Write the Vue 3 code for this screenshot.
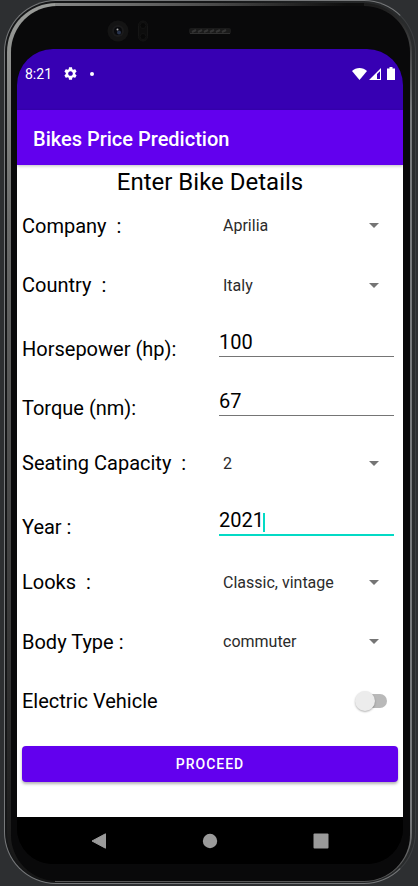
<script setup>
import { reactive } from 'vue'

const fields = [
  { id: 'company', label: 'Company  :', type: 'select', options: ['Aprilia', 'Bajaj', 'Honda', 'Yamaha'] },
  { id: 'country', label: 'Country  :', type: 'select', options: ['Italy', 'India', 'Japan', 'Germany'] },
  { id: 'horsepower', label: 'Horsepower (hp):', type: 'text' },
  { id: 'torque', label: 'Torque (nm):', type: 'text' },
  { id: 'seating', label: 'Seating Capacity  :', type: 'select', options: ['2', '1', '3'] },
  { id: 'year', label: 'Year :', type: 'text', active: true },
  { id: 'looks', label: 'Looks  :', type: 'select', options: ['Classic, vintage', 'Sporty', 'Modern'] },
  { id: 'body', label: 'Body Type :', type: 'select', options: ['commuter', 'cruiser', 'tourer'] },
]

const form = reactive({
  company: 'Aprilia',
  country: 'Italy',
  horsepower: '100',
  torque: '67',
  seating: '2',
  year: '2021',
  looks: 'Classic, vintage',
  body: 'commuter',
  electric: false,
})
</script>

<template>
  <div class="stage">
    <div class="rim">
      <div class="shine">
        <div class="phone">
          <div class="sensors">
            <svg class="camera" viewBox="0 0 42 22" aria-hidden="true">
              <circle cx="11" cy="11" r="10.5" fill="#141414" />
              <circle cx="11" cy="11" r="6" fill="#1b1b1c" />
              <circle cx="11" cy="11" r="4" fill="#08090c" />
              <circle cx="12" cy="12.5" r="2" fill="#29344d" />
              <circle cx="10.5" cy="9.5" r="1" fill="#b0b0b0" />
              <rect x="31.5" y="1" width="9" height="20" rx="4.5" fill="#0d0d0d" stroke="#151515" />
              <circle cx="36" cy="5.5" r="3" fill="#080808" stroke="#131313" />
              <circle cx="36" cy="16.5" r="3" fill="#080808" stroke="#131313" />
            </svg>
            <svg class="speaker" viewBox="0 0 42 6" aria-hidden="true">
              <rect width="42" height="6" rx="2" fill="#1a1a1a" />
              <path d="M3 4l4-2M9 4l4-2M15 4l4-2M21 4l4-2M27 4l4-2M33 4l4-2" stroke="#343434" stroke-width="2" />
              <path d="M1 5.5h40" stroke="#303030" />
            </svg>
          </div>

          <main class="screen">
            <div class="status">
              <span>8:21</span>
              <svg class="gear" viewBox="2 2 20 20" aria-hidden="true">
                <path fill="#fff" d="M19.14 12.94c.04-.3.06-.61.06-.94 0-.32-.02-.64-.07-.94l2.03-1.58c.18-.14.23-.41.12-.61l-1.92-3.32c-.12-.22-.37-.29-.59-.22l-2.39.96c-.5-.38-1.03-.7-1.62-.94l-.36-2.54c-.04-.24-.24-.41-.48-.41h-3.84c-.24 0-.43.17-.47.41l-.36 2.54c-.59.24-1.13.57-1.62.94l-2.39-.96c-.22-.08-.47 0-.59.22L2.74 8.87c-.12.21-.08.47.12.61l2.03 1.58c-.05.3-.09.63-.09.94s.02.64.07.94l-2.03 1.58c-.18.14-.23.41-.12.61l1.92 3.32c.12.22.37.29.59.22l2.39-.96c.5.38 1.03.7 1.62.94l.36 2.54c.05.24.24.41.48.41h3.84c.24 0 .44-.17.47-.41l.36-2.54c.59-.24 1.13-.56 1.62-.94l2.39.96c.22.08.47 0 .59-.22l1.92-3.32c.12-.22.07-.47-.12-.61l-2.01-1.58zM12 15.6c-1.98 0-3.6-1.62-3.6-3.6s1.62-3.6 3.6-3.6 3.6 1.62 3.6 3.6-1.62 3.6-3.6 3.6z" />
              </svg>
              <i class="dot"></i>
              <svg class="radio" viewBox="0 0 43 14" aria-hidden="true">
                <path fill="#fff" d="M0 4C4 0 11 0 15 4L7.5 13z" />
                <path fill="#fff" fill-rule="evenodd" d="M29 1V13H17zM28 4.2L25 7v5h3z" />
                <path fill="#fff" d="M37.500 0h3V1.500H43V13h-8V1.500h2.500z" />
              </svg>
            </div>

            <header class="appbar"><h1>Bikes Price Prediction</h1></header>

            <form class="form" @submit.prevent>
              <h2>Enter Bike Details</h2>
              <div v-for="f in fields" :key="f.id" class="row" :class="{ entry: f.type === 'text' }">
                <label :for="f.id">{{ f.label }}</label>
                <div v-if="f.type === 'select'" class="pick">
                  <select :id="f.id" v-model="form[f.id]">
                    <option v-for="o in f.options" :key="o">{{ o }}</option>
                  </select>
                  <svg viewBox="0 0 10 5" aria-hidden="true"><path d="M0 0h10L5 5z" fill="#757575" /></svg>
                </div>
                <div v-else class="box" :class="{ active: f.active }">
                  <input :id="f.id" v-model="form[f.id]" type="text" inputmode="numeric" />
                  <i v-if="f.active" class="caret"></i>
                </div>
              </div>
              <div class="row toggle">
                <label for="electric">Electric Vehicle</label>
                <input id="electric" v-model="form.electric" type="checkbox" role="switch" />
              </div>
              <button class="proceed" type="submit">PROCEED</button>
            </form>

            <nav class="navbar">
              <button type="button" aria-label="Back">
                <svg viewBox="0 0 16 16"><path d="M14.5.8V15.200L1 8z" fill="#9a9a9a" stroke="#9a9a9a" stroke-linejoin="round" /></svg>
              </button>
              <button type="button" aria-label="Home">
                <svg viewBox="0 0 16 16"><circle cx="8" cy="8" r="7.2" fill="#9a9a9a" /></svg>
              </button>
              <button type="button" aria-label="Recent apps">
                <svg viewBox="0 0 16 16"><rect x=".5" y=".5" width="15" height="15" rx="1" fill="#9a9a9a" /></svg>
              </button>
            </nav>
          </main>
        </div>
      </div>
    </div>
  </div>
</template>

<style>
body {
  margin: 0;
  background: #2d2f31;
}
</style>

<style scoped>
* {
  box-sizing: border-box;
}
.stage {
  display: flex;
  min-height: 100vh;
  padding: 0 2px 2px 4px;
  background: #2d2f31;
  font-family: Roboto, "Noto Sans", sans-serif;
  color: #000;
}
.rim {
  flex: 1;
  display: flex;
  padding: 2px 3px 1px 2px;
  border: 1px solid #77797b;
  border-right-color: #3c3e40;
  border-radius: 52px;
  background: linear-gradient(90deg, #151617 50%, #2a2c2d 100%);
}
.shine {
  flex: 1;
  display: flex;
  padding: 3px 2px 1px 4px;
  border-radius: 49px;
  background:
    linear-gradient(180deg, #9a9c99 0, #6a6b6a 25%, #3a3a3a 70%, #151515 100%) left / 48px 100% no-repeat,
    linear-gradient(180deg, #1b1b1b 0, #77797b 12%, #77797b 92%, #555 100%) right / 48px 100% no-repeat,
    linear-gradient(90deg, #8a8b8a 10%, #4c4c4c 50%, #0d0d0d 84%) top / 100% 50% no-repeat,
    #555;
}
.phone {
  flex: 1;
  display: flex;
  flex-direction: column;
  padding: 0 7px 17px 6px;
  border-radius: 46px;
  background: #09090a;
}
.sensors {
  display: flex;
  align-items: center;
  height: 43px;
  padding: 6px 0 0 90px;
}
.camera {
  width: 42px;
  height: 22px;
}
.speaker {
  width: 42px;
  height: 6px;
  margin-left: 40px;
}
.screen {
  flex: 1;
  display: flex;
  flex-direction: column;
  overflow: hidden;
  border-radius: 36px;
  background: #000;
}
.status {
  display: flex;
  align-items: center;
  height: 61px;
  padding: 0 8px 12px;
  background: #3700b3;
  color: #fff;
  font-size: 14px;
}
.gear {
  width: 13px;
  height: 13px;
  margin-left: 12px;
}
.dot {
  width: 4px;
  height: 4px;
  margin-left: 13px;
  border-radius: 50%;
  background: #fff;
}
.radio {
  width: 43px;
  height: 14px;
  margin-left: auto;
}
.appbar {
  z-index: 1;
  display: flex;
  align-items: center;
  height: 55px;
  padding: 3px 16px 0;
  background: #6200ee;
  box-shadow: 0 1px 3px rgba(0, 0, 0, 0.25);
  color: #fff;
}
h1 {
  margin: 0;
  font-size: 20px;
  font-weight: 500;
}
.form {
  flex: 1;
  display: flex;
  flex-direction: column;
  padding: 0 5px 35px;
  background: #fff;
}
h2 {
  margin: 0;
  padding-top: 3px;
  font-size: 24px;
  font-weight: 400;
  line-height: 28px;
  text-align: center;
}
.row {
  flex: 1;
  display: grid;
  grid-template-columns: 197px 1fr;
  align-items: center;
  padding-right: 4px;
}
label {
  font-size: 20px;
  line-height: 24px;
  white-space: pre;
}
.entry label {
  padding-top: 8px;
}
.pick {
  display: grid;
  align-items: center;
}
.pick select,
.pick svg {
  grid-area: 1 / 1;
}
select {
  width: 100%;
  height: 24px;
  margin: 0;
  padding: 0 32px 0 4px;
  border: 0;
  appearance: none;
  background: none;
  color: #2b2b2b;
  font: 16px Roboto, "Noto Sans", sans-serif;
}
.pick svg {
  justify-self: end;
  width: 10px;
  height: 5px;
  margin-right: 15px;
  pointer-events: none;
}
.box {
  position: relative;
  height: 34px;
}
.box input {
  display: block;
  width: 100%;
  height: 29px;
  margin: 0;
  padding: 0;
  border: 0;
  border-bottom: 1px solid #757575;
  outline: 0;
  border-radius: 0;
  background: none;
  color: #000;
  font: 20px Roboto, "Noto Sans", sans-serif;
}
.box.active input {
  height: 30px;
  border-bottom: 2px solid #03dac5;
}
.caret {
  position: absolute;
  top: 7px;
  left: 44px;
  width: 2px;
  height: 19px;
  background: #03dac5;
}
.toggle {
  grid-template-columns: 1fr auto;
  padding-right: 11px;
}
.toggle input {
  position: relative;
  width: 32px;
  height: 20px;
  margin: 0;
  appearance: none;
}
.toggle input::before {
  content: "";
  position: absolute;
  inset: 3px 0 3px 4px;
  border-radius: 7px;
  background: #b9b9b9;
}
.toggle input::after {
  content: "";
  position: absolute;
  top: 0;
  left: 0;
  width: 20px;
  height: 20px;
  border-radius: 50%;
  background: #ececec;
  box-shadow: 0 1px 2px rgba(0, 0, 0, 0.3);
}
.toggle input:checked::after {
  left: 12px;
  background: #6200ee;
}
.proceed {
  height: 36px;
  margin: 15px 0 0;
  padding: 0;
  border: 0;
  border-radius: 4px;
  background: #6200ee;
  box-shadow: 0 2px 3px rgba(0, 0, 0, 0.3);
  color: #fff;
  font: 500 14px Roboto, "Noto Sans", sans-serif;
  letter-spacing: 1px;
}
.navbar {
  display: flex;
  justify-content: space-between;
  align-items: center;
  height: 47px;
  padding: 0 66px;
  background: #000;
}
.navbar button {
  width: 32px;
  height: 32px;
  padding: 8px;
  border: 0;
  background: none;
}
.navbar svg {
  display: block;
  width: 16px;
  height: 16px;
}
</style>
